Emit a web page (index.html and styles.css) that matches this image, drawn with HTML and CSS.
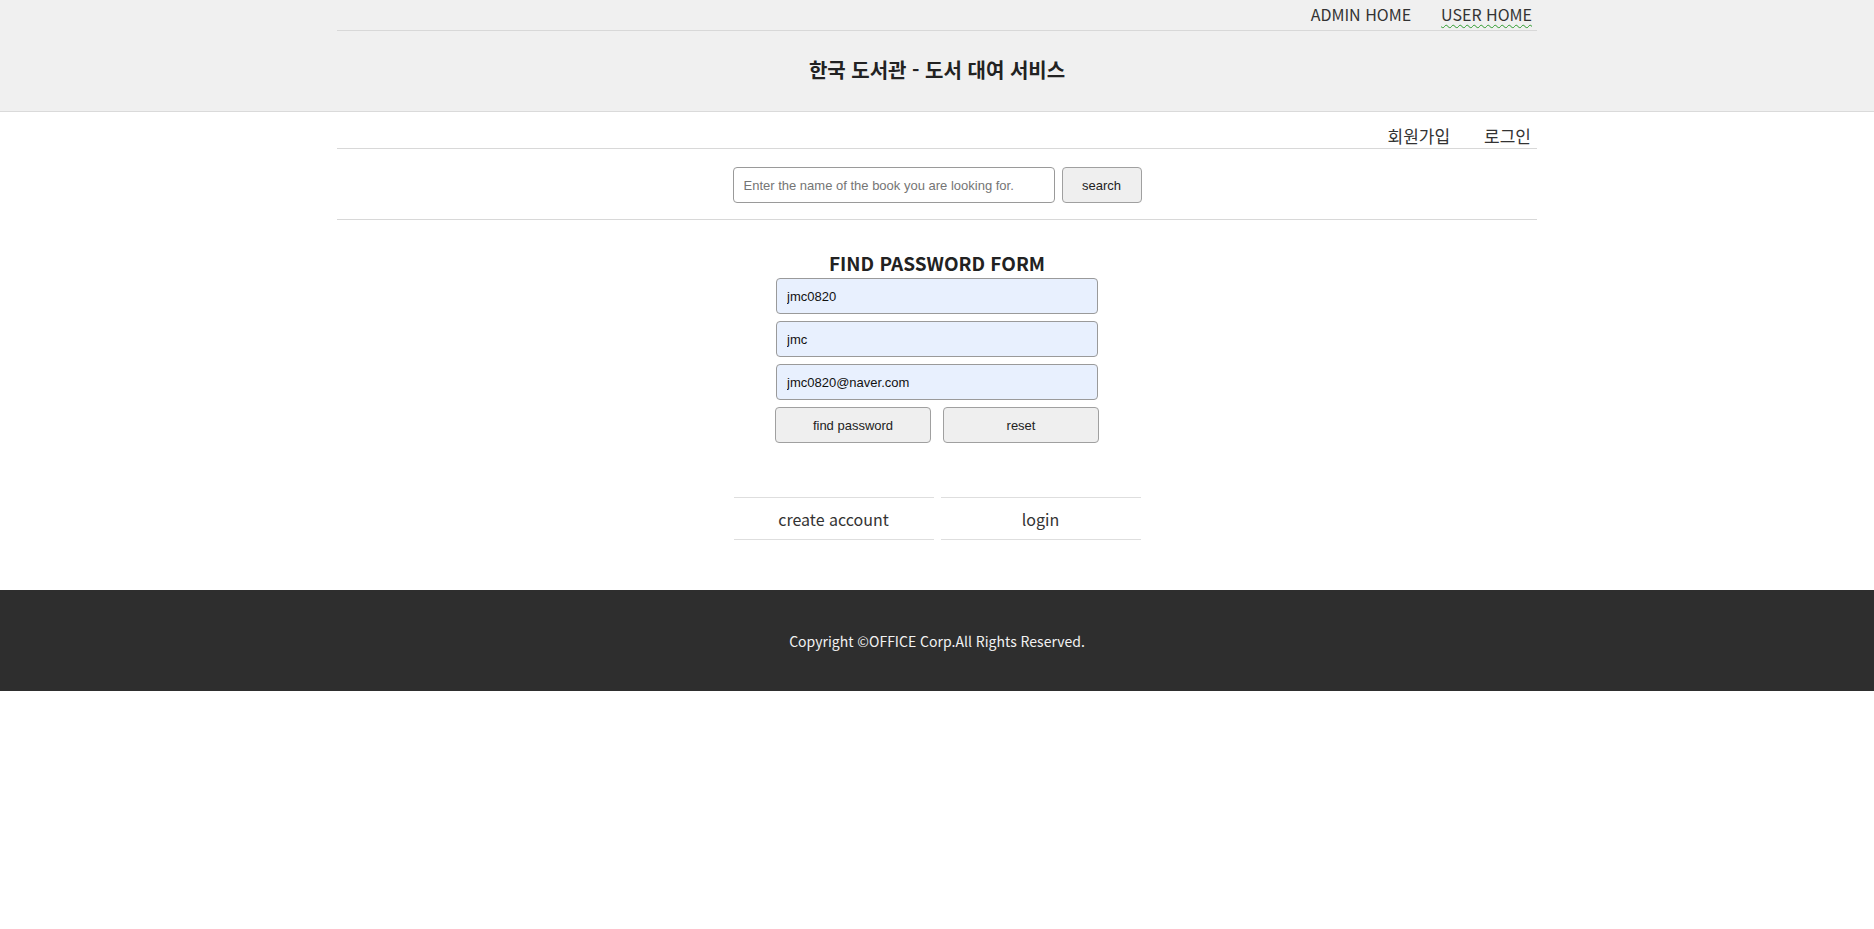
FILE: index.html
```html
<!DOCTYPE html>
<html lang="ko">
<head>
<meta charset="utf-8">
<title>한국 도서관 - 도서 대여 서비스</title>
<link rel="stylesheet" href="styles.css">
</head>
<body>
<header class="site-header">
  <div class="container">
    <nav class="admin-nav">
      <a href="#">ADMIN HOME</a>
      <a href="#" class="current">USER HOME</a>
    </nav>
    <h1 class="site-title">한국 도서관 - 도서 대여 서비스</h1>
  </div>
</header>
<div class="container">
  <nav class="user-nav">
    <a href="#">회원가입</a>
    <a href="#">로그인</a>
  </nav>
  <form class="search-bar">
    <input type="text" class="search-input" placeholder="Enter the name of the book you are looking for.">
    <button type="button" class="btn search-btn">search</button>
  </form>
</div>
<main class="content">
  <form class="pw-form">
    <h2 class="form-title">FIND PASSWORD FORM</h2>
    <input type="text" class="field" value="jmc0820">
    <input type="text" class="field" value="jmc">
    <input type="text" class="field" value="jmc0820@naver.com">
    <div class="form-buttons">
      <button type="button" class="btn">find password</button>
      <button type="reset" class="btn">reset</button>
    </div>
  </form>
  <div class="sub-links">
    <a href="#">create account</a>
    <a href="#">login</a>
  </div>
</main>
<footer class="site-footer">
  <p>Copyright ©OFFICE Corp.All Rights Reserved.</p>
</footer>
</body>
</html>
```

FILE: styles.css
```css
* { box-sizing: border-box; }
html, body { margin: 0; padding: 0; background: #fff; }
body {
  font-family: "Noto Sans CJK KR", "Noto Sans", sans-serif;
  color: #333;
}
a { color: #333; text-decoration: none; }
.container { width: 1200px; margin: 0 auto; }

.site-header {
  background: #f0f0f0;
  border-bottom: 1px solid #dadada;
}
.admin-nav {
  height: 31px;
  border-bottom: 1px solid #d8d8d8;
  display: flex;
  justify-content: flex-end;
  align-items: center;
  gap: 30px;
  padding-right: 5px;
  font-size: 16px;
  line-height: 20px;
}
.admin-nav a { color: #333; padding-bottom: 3px; }
.admin-nav a.current {
  text-decoration: underline wavy #2c9a2c;
  text-decoration-thickness: 1px;
  text-underline-offset: 3px;
}
.site-title {
  margin: 0;
  height: 80px;
  display: flex;
  align-items: center;
  justify-content: center;
  font-size: 20px;
  font-weight: 700;
  color: #222;
  padding-bottom: 4px;
}

.user-nav {
  height: 37px;
  border-bottom: 1px solid #d8d8d8;
  display: flex;
  justify-content: flex-end;
  align-items: flex-end;
  gap: 34px;
  padding-right: 6px;
  font-size: 17px;
  line-height: 22px;
  padding-bottom: 1px;
}
.search-bar {
  height: 71px;
  border-bottom: 1px solid #d8d8d8;
  display: flex;
  justify-content: center;
  align-items: flex-start;
  gap: 7px;
  padding-top: 18px;
}
.search-input {
  width: 322px;
  height: 36px;
  border: 1px solid #9a9a9a;
  border-radius: 4px;
  padding: 0 10px;
  font-family: "Liberation Sans", Arial, sans-serif;
  font-size: 13px;
  color: #333;
  background: #fff;
}
.search-input::placeholder { color: #757575; }
.btn {
  height: 36px;
  border: 1px solid #a0a0a0;
  border-radius: 4px;
  background: #efefef;
  font-family: "Liberation Sans", Arial, sans-serif;
  font-size: 13px;
  color: #222;
  padding: 0;
}
.search-btn { width: 80px; }

.content {
  display: flex;
  flex-direction: column;
  align-items: center;
  padding-top: 28px;
}
.pw-form {
  width: 324px;
  display: flex;
  flex-direction: column;
  gap: 7px;
}
.form-title {
  margin: 0 0 -7px;
  text-align: center;
  font-size: 19px;
  font-weight: 700;
  line-height: 30px;
  color: #222;
}
.field {
  width: 322px;
  margin-left: 1px;
  height: 36px;
  border: 1px solid #9a9a9a;
  border-radius: 4px;
  background: #e8f0fe;
  padding: 0 10px;
  font-family: "Liberation Sans", Arial, sans-serif;
  font-size: 13px;
  color: #111;
}
.form-buttons {
  display: flex;
  gap: 12px;
}
.form-buttons .btn { width: 156px; }

.sub-links {
  margin-top: 54px;
  display: flex;
  gap: 7px;
}
.sub-links a {
  width: 200px;
  height: 43px;
  border-top: 1px solid #dedede;
  border-bottom: 1px solid #dedede;
  display: flex;
  align-items: center;
  justify-content: center;
  font-size: 16px;
  color: #333;
}

.site-footer {
  margin-top: 50px;
  height: 101px;
  background: #2e2e2e;
  display: flex;
  align-items: center;
  justify-content: center;
}
.site-footer p {
  margin: 0;
  color: #f2f2f2;
  font-size: 14px;
}
```
